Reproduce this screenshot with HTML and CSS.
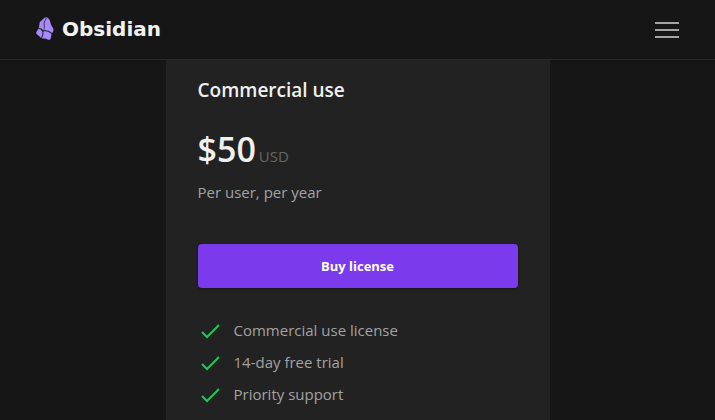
FILE: index.html
```html
<!DOCTYPE html>
<html lang="en">
<head>
  <meta charset="UTF-8" />
  <meta name="viewport" content="width=device-width, initial-scale=1" />
  <title>Obsidian - Pricing</title>
  <link rel="stylesheet" href="styles.css">
</head>
<body>

  <header class="site-header">
    <a href="#" class="logo">
      <svg class="logo-mark" viewBox="0 0 54 69" aria-hidden="true">
        <path d="M28 1 L13 14 Q11 16 11 20 L9 32 Q18 33 22 40 Q25 32 23 24 Q21 14 29 5 Z" />
        <path d="M31 1 Q41 5 43 17 Q44 24 49 31 Q53 36 52 41 L48 48 Q39 39 25 39 Q28 31 26 23 Q24 15 32 5 Z" />
        <path d="M8 35 Q17 37 19 45 Q20 54 15 62 L2 50 Q0 48 1 46 Z" />
        <path d="M23 43 Q38 42 46 51 L44 64 Q43 69 38 68 Q30 64 18 64 Q24 55 23 43 Z" />
      </svg>
      <span class="logo-text">Obsidian</span>
    </a>
    <button class="menu-button" type="button" aria-label="Menu">
      <svg class="menu-icon" viewBox="0 0 24 16" aria-hidden="true">
        <path d="M0 1h24M0 8h24M0 15h24" />
      </svg>
    </button>
  </header>

  <main class="pricing">
    <section class="card">
      <h2 class="card-title">Commercial use</h2>
      <div class="price"><span class="amount">$50</span><span class="currency">USD</span></div>
      <p class="period">Per user, per year</p>
      <button class="buy-button" type="button">Buy license</button>
      <ul class="features">
        <li>
          <svg class="check" viewBox="0 0 24 24" aria-hidden="true"><path d="M4 14l5 5L21 7" /></svg>
          Commercial use license
        </li>
        <li>
          <svg class="check" viewBox="0 0 24 24" aria-hidden="true"><path d="M4 14l5 5L21 7" /></svg>
          14-day free trial
        </li>
        <li>
          <svg class="check" viewBox="0 0 24 24" aria-hidden="true"><path d="M4 14l5 5L21 7" /></svg>
          Priority support
        </li>
      </ul>
    </section>
  </main>

</body>
</html>
```
FILE: styles.css
```css
* {
  box-sizing: border-box;
}

body {
  display: flex;
  flex-direction: column;
  min-height: 100vh;
  margin: 0;
  background-color: #161616;
  color: #a3a3a3;
  font-family: "Open Sans", "Noto Sans", sans-serif;
  font-size: 15px;
  line-height: 24px;
}

.site-header {
  display: flex;
  align-items: center;
  justify-content: space-between;
  height: 60px;
  padding: 0 36px;
  border-bottom: 1px solid #2a2a2a;
}

.logo {
  display: flex;
  align-items: center;
  gap: 8px;
  padding-bottom: 2px;
  color: #f2f2f2;
  text-decoration: none;
}

.logo-mark {
  width: 18px;
  height: 23px;
  fill: #a78bfa;
  stroke: #a78bfa;
  stroke-width: 1;
}

.logo-text {
  font-family: "DejaVu Sans", sans-serif;
  font-size: 20px;
  font-weight: bold;
}

.menu-button {
  display: flex;
  padding: 0;
  border: none;
  background: none;
  color: #a3a3a3;
  cursor: pointer;
}

.menu-icon {
  width: 24px;
  height: 16px;
  stroke: currentColor;
  stroke-width: 2;
}

.pricing {
  display: flex;
  flex: 1;
  justify-content: center;
}

.card {
  width: 100%;
  max-width: 384px;
  padding: 16px 32px 0;
  background-color: #222;
}

.card-title {
  margin: 0 0 24px;
  color: #f0f0f0;
  font-size: 19px;
  font-weight: 600;
  line-height: 28px;
}

.price {
  display: flex;
  align-items: baseline;
  gap: 3px;
  line-height: 42px;
}

.amount {
  color: #f0f0f0;
  font-size: 34px;
  font-weight: 600;
}

.currency {
  color: #666;
}

.period {
  margin: 3px 0 40px;
}

.buy-button {
  width: 100%;
  height: 44px;
  border: none;
  border-radius: 4px;
  background-color: #7c3aed;
  box-shadow: 0 1px 3px rgba(0, 0, 0, 0.4);
  color: #fff;
  font-family: inherit;
  font-size: 13px;
  font-weight: 700;
  cursor: pointer;
}

.features {
  margin: 26px 0 0;
  padding: 0;
  list-style: none;
}

.features li {
  display: flex;
  align-items: center;
  gap: 12px;
  height: 32px;
}

.check {
  width: 24px;
  height: 24px;
  fill: none;
  stroke: #22c55e;
  stroke-width: 2;
}
```
